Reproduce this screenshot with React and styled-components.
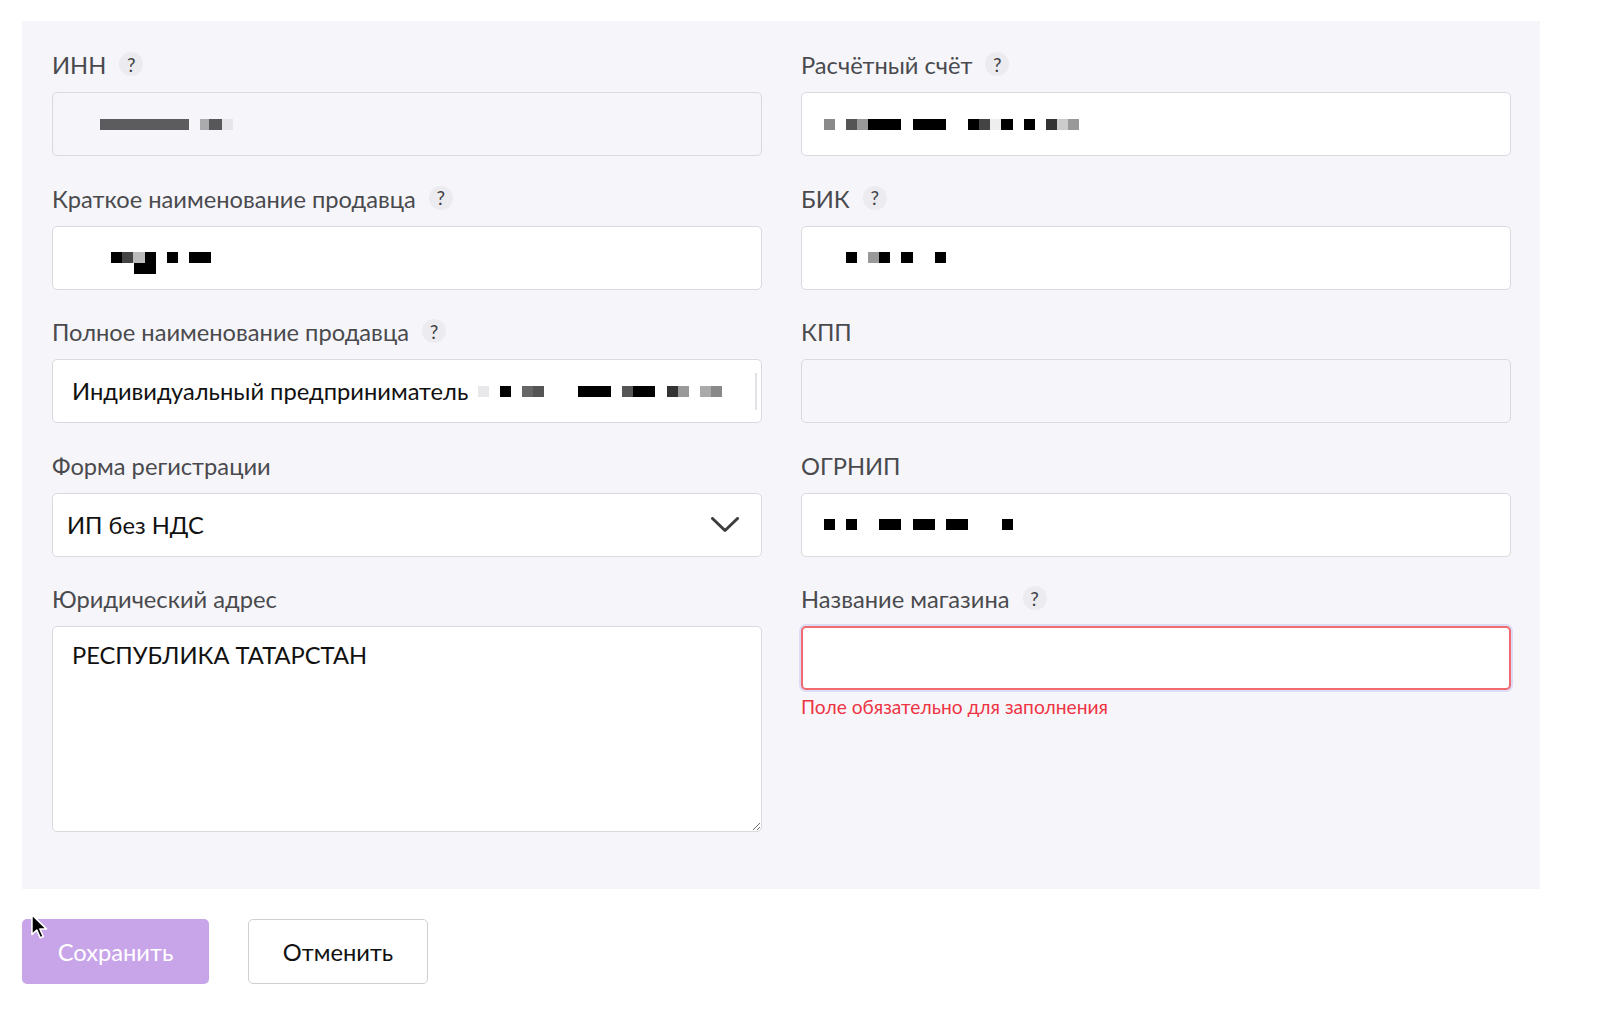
import React from "react";
import styled, { createGlobalStyle } from "styled-components";

const Global = createGlobalStyle`
  html, body { margin: 0; padding: 0; background: #ffffff; }
  body { font-family: Lato, "Open Sans", "Liberation Sans", sans-serif; color: #111; }
  * { box-sizing: border-box; }
`;

const Page = styled.div`
  position: relative;
  padding: 21px 0 0 22px;
  width: 1600px;
  min-height: 1020px;
`;

const Panel = styled.section`
  width: 1518px;
  background: #f6f6fa;
  padding: 29px 29px 57px 30px;
  display: grid;
  grid-template-columns: 710px 710px;
  column-gap: 39px;
  row-gap: 27.5px;
  align-items: start;
`;

const Field = styled.div`
  display: flex;
  flex-direction: column;
`;

const LabelRow = styled.div`
  display: flex;
  align-items: center;
  gap: 13px;
  height: 30px;
  margin-bottom: 12px;
`;

const LabelText = styled.span`
  font-size: 23.7px;
  color: #4a4a4e;
  line-height: 30px;
`;

const Help = styled.span`
  width: 24px;
  height: 24px;
  border-radius: 50%;
  background: #ebebf0;
  color: #3f3f44;
  font-size: 19px;
  font-weight: 400;
  display: inline-flex;
  align-items: center;
  justify-content: center;
  margin-top: -2px;
`;

const Box = styled.div`
  height: 64px;
  border: 1px solid #d9d9df;
  border-radius: 5px;
  background: ${(p) => (p.$disabled ? "#f6f6fa" : "#ffffff")};
  display: flex;
  align-items: center;
  padding-left: ${(p) => p.$pad || 19}px;
  padding-right: 4px;
  font-size: 23.7px;
  color: #111;
  overflow: hidden;
  white-space: nowrap;
`;

const BoxText = styled.span`
  margin-right: 10px;
`;

const Spacer = styled.div`
  flex: 1;
`;

const ScrollLine = styled.div`
  width: 2px;
  height: 37px;
  background: #e2e2e6;
  flex: none;
`;

const Redact = styled.div`
  display: flex;
  flex-direction: column;
  margin-left: ${(p) => p.$offset || 0}px;
  margin-top: ${(p) => (p.$rows - 1) * 11}px;
`;

const RedactRow = styled.div`
  display: flex;
  height: 11px;
`;

const Cell = styled.span`
  display: block;
  flex: none;
  height: 11px;
`;

const Chevron = styled.svg`
  flex: none;
  margin-right: 18px;
`;

const Area = styled.textarea`
  height: 206px;
  border: 1px solid #d9d9df;
  border-radius: 5px;
  background: #fff;
  padding: 13px 19px;
  font-family: Lato, "Open Sans", "Liberation Sans", sans-serif;
  font-size: 23.7px;
  line-height: 30px;
  color: #111;
  resize: vertical;
  outline: none;
`;

const ErrorInput = styled.input`
  height: 64px;
  border: 2px solid #f16a6f;
  border-radius: 5px;
  background: #fff;
  box-shadow: 0 0 0 2px #dcdcf6;
  outline: none;
  font-size: 23px;
`;

const ErrorText = styled.div`
  margin-top: 6px;
  font-size: 19.2px;
  line-height: 22px;
  color: #ee3344;
`;

const Actions = styled.div`
  display: flex;
  gap: 39px;
  margin-top: 30px;
`;

const Button = styled.button`
  height: 65px;
  width: ${(p) => p.$w}px;
  border-radius: 5px;
  font-family: Lato, "Open Sans", "Liberation Sans", sans-serif;
  font-size: 23.7px;
  cursor: pointer;
  border: ${(p) => (p.$primary ? "none" : "1px solid #cfcfd4")};
  background: ${(p) => (p.$primary ? "#c8a4e9" : "#ffffff")};
  color: ${(p) => (p.$primary ? "#ffffff" : "#111111")};
`;

const Cursor = styled.svg`
  position: absolute;
  left: 30px;
  top: 913px;
  pointer-events: none;
`;

/* redacted pixel blocks: rows of [width, color] cells; "t" = transparent gap */
const Redacted = ({ rows, offset }) => (
  <Redact $offset={offset} $rows={rows.length}>
    {rows.map((row, i) => (
      <RedactRow key={i}>
        {row.map(([w, c], j) => (
          <Cell key={j} style={{ width: w, background: c === "t" ? "transparent" : c }} />
        ))}
      </RedactRow>
    ))}
  </Redact>
);

const Label = ({ text, help }) => (
  <LabelRow>
    <LabelText>{text}</LabelText>
    {help && <Help>?</Help>}
  </LabelRow>
);

const innCells = [[[89, "#5c5c5e"], [11, "t"], [9, "#ababad"], [13, "#58585a"], [11, "#e6e6ea"]]];
const accountCells = [[
  [11, "#8a8a8a"], [11, "t"], [11, "#555"], [11, "#999"], [33, "#000"], [12, "t"], [33, "#000"],
  [22, "t"], [11, "#000"], [11, "#444"], [11, "#eee"], [12, "#000"], [11, "t"], [11, "#000"],
  [11, "t"], [11, "#333"], [11, "#ccc"], [11, "#999"],
]];
const shortCells = [
  [[11, "#000"], [11, "#444"], [12, "#bbb"], [11, "#000"], [11, "t"], [11, "#000"], [11, "t"], [22, "#000"]],
  [[23, "t"], [22, "#000"]],
];
const bikCells = [[[11, "#000"], [11, "t"], [11, "#999"], [11, "#000"], [11, "t"], [12, "#000"], [22, "t"], [11, "#000"]]];
const fullCells = [[
  [11, "#e8e8ea"], [11, "t"], [11, "#000"], [11, "t"], [11, "#666"], [11, "#555"], [34, "t"],
  [33, "#000"], [11, "t"], [11, "#555"], [22, "#000"], [12, "t"], [11, "#333"], [11, "#999"],
  [11, "t"], [11, "#aaa"], [11, "#888"],
]];
const ogrnCells = [[
  [11, "#000"], [11, "t"], [11, "#000"], [22, "t"], [22, "#000"], [12, "t"], [22, "#000"],
  [11, "t"], [22, "#000"], [34, "t"], [11, "#000"],
]];

export default function App() {
  return (
    <Page>
      <Global />
      <Panel>
        <Field>
          <Label text="ИНН" help />
          <Box $disabled>
            <Redacted rows={innCells} offset={28} />
          </Box>
        </Field>
        <Field>
          <Label text="Расчётный счёт" help />
          <Box>
            <Redacted rows={accountCells} offset={3} />
          </Box>
        </Field>

        <Field>
          <Label text="Краткое наименование продавца" help />
          <Box>
            <Redacted rows={shortCells} offset={39} />
          </Box>
        </Field>
        <Field>
          <Label text="БИК" help />
          <Box>
            <Redacted rows={bikCells} offset={25} />
          </Box>
        </Field>

        <Field>
          <Label text="Полное наименование продавца" help />
          <Box>
            <BoxText>Индивидуальный предприниматель</BoxText>
            <Redacted rows={fullCells} />
            <Spacer />
            <ScrollLine />
          </Box>
        </Field>
        <Field>
          <Label text="КПП" />
          <Box $disabled />
        </Field>

        <Field>
          <Label text="Форма регистрации" />
          <Box $pad={14}>
            <BoxText>ИП без НДС</BoxText>
            <Spacer />
            <Chevron width="28" height="16" viewBox="0 0 28 16">
              <polyline points="1.5,1.5 14,13.5 26.5,1.5" fill="none" stroke="#3d3d40" strokeWidth="3" strokeLinecap="round" strokeLinejoin="round" />
            </Chevron>
          </Box>
        </Field>
        <Field>
          <Label text="ОГРНИП" />
          <Box>
            <Redacted rows={ogrnCells} offset={3} />
          </Box>
        </Field>

        <Field>
          <Label text="Юридический адрес" />
          <Area defaultValue="РЕСПУБЛИКА ТАТАРСТАН" />
        </Field>
        <Field>
          <Label text="Название магазина" help />
          <ErrorInput />
          <ErrorText>Поле обязательно для заполнения</ErrorText>
        </Field>
      </Panel>

      <Actions>
        <Button $primary $w={187}>Сохранить</Button>
        <Button $w={180}>Отменить</Button>
      </Actions>

      <Cursor width="20" height="28" viewBox="0 0 18 26">
        <path d="M1.5 1.5 L1.5 20 L6 15.8 L9.2 23 L12 21.8 L8.9 14.8 L15 14.8 Z" fill="#000" stroke="#fff" strokeWidth="1.5" strokeLinejoin="round" />
      </Cursor>
    </Page>
  );
}
